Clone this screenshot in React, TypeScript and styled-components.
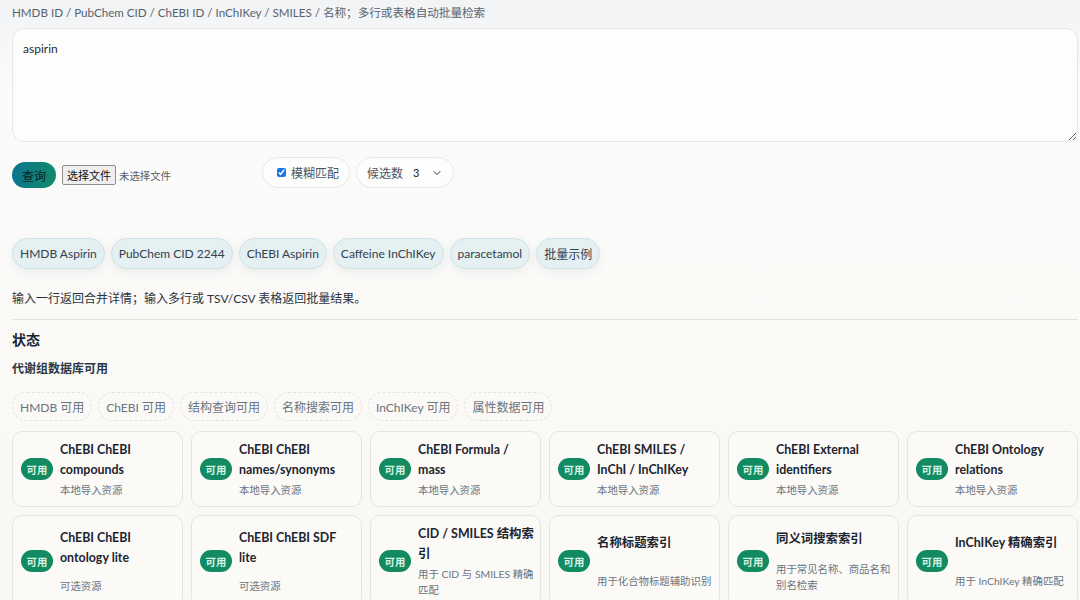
import React from "react";
import styled, { createGlobalStyle } from "styled-components";
import { ChevronDown } from "lucide-react";

const FONT = `Lato, "Noto Sans CJK SC", sans-serif`;

const Global = createGlobalStyle`
  html, body { margin: 0; padding: 0; }
  body {
    font-family: ${FONT};
    background: linear-gradient(180deg, #f1f3f5 0px, #fbfbfa 90px, #faf8f4 600px);
    min-height: 600px;
    color: #1f2a37;
  }
  * { box-sizing: border-box; }
`;

const Page = styled.div`
  padding: 5px 2px 0 12px;
  display: flex;
  flex-direction: column;
`;

const FieldLabel = styled.label`
  font-size: 11.6px;
  line-height: 16px;
  color: #58626f;
  margin-bottom: 7px;
`;

const Area = styled.textarea`
  width: 100%;
  height: 114px;
  border: 1px solid #e3e6ea;
  border-radius: 12px;
  background: #fdfdfc;
  padding: 12px 10px;
  font-family: ${FONT};
  font-size: 12px;
  line-height: 16px;
  color: #1f2a37;
  outline: none;
  display: block;
`;

const Toolbar = styled.div`
  display: flex;
  align-items: flex-end;
  margin-top: 15px;
`;

const Group = styled.div<{ $end?: boolean }>`
  display: flex;
  align-items: ${(p) => (p.$end ? "flex-end" : "center")};
  gap: 6px;
`;

const QueryBtn = styled.button`
  height: 26px;
  padding: 0 10px;
  border: none;
  border-radius: 999px;
  background: linear-gradient(90deg, #0c7590, #0f8a6a);
  color: #0c1d24;
  font-family: ${FONT};
  font-size: 12px;
`;

const FileBox = styled.div`
  display: flex;
  align-items: center;
  width: 200px;
  height: 23px;
  gap: 3px;
`;

const FileBtn = styled.span`
  display: inline-flex;
  align-items: center;
  height: 20px;
  padding: 0 4px;
  border: 1px solid #8f8f8f;
  border-radius: 2px;
  background: #efefef;
  font-size: 11px;
  color: #111;
`;

const FileText = styled.span`
  font-size: 10.4px;
  color: #555d66;
`;

const OptPill = styled.label`
  display: inline-flex;
  align-items: center;
  height: 31px;
  padding: 0 10px;
  gap: 5px;
  border: 1px solid #e6e8eb;
  border-radius: 999px;
  background: #fdfdfc;
  font-size: 12px;
  color: #4b5563;
`;

const Check = styled.input`
  width: 9px;
  height: 9px;
  margin: 0 0 0 4px;
  accent-color: #1a73e8;
`;

const SelectVal = styled.span`
  font-size: 11px;
  color: #222;
  margin-left: 5px;
  margin-right: 7px;
`;

const Chips = styled.div`
  display: flex;
  gap: 6px;
  margin-top: 50px;
`;

const Chip = styled.button`
  height: 31px;
  padding: 0 7px;
  border: 1px solid #cfe2e6;
  border-radius: 999px;
  background: #e4f0f1;
  box-shadow: 0 3px 10px rgba(40, 80, 90, 0.08);
  font-family: ${FONT};
  font-size: 12px;
  color: #344150;
`;

const Hint = styled.p`
  margin: 21px 0 0;
  font-size: 12px;
  line-height: 18px;
  color: #2a333d;
`;

const Divider = styled.hr`
  border: none;
  border-top: 1px solid #e4e4e1;
  margin: 11px 0 0;
  width: 100%;
`;

const H2 = styled.h2`
  margin: 9px 0 0;
  font-size: 14px;
  line-height: 22px;
  font-weight: 700;
  color: #1d2530;
`;

const H3 = styled.h3`
  margin: 9px 0 0;
  font-size: 12px;
  line-height: 18px;
  font-weight: 700;
  color: #2c3844;
`;

const StatusRow = styled.div`
  display: flex;
  gap: 6px;
  margin-top: 14px;
`;

const StatusPill = styled.span`
  display: inline-flex;
  align-items: center;
  height: 29px;
  padding: 0 7px;
  border: 1px dashed #dfe3e6;
  border-radius: 999px;
  font-size: 12px;
  color: #6a7480;
`;

const Grid = styled.div`
  display: grid;
  grid-template-columns: repeat(6, 1fr);
  gap: 8px;
  margin-top: 10px;
`;

const Card = styled.div`
  display: flex;
  align-items: center;
  gap: 7px;
  padding: 8px 6px 8px 8px;
  border: 1px solid #e4e5e2;
  border-radius: 10px;
  background: #fbfaf7;
`;

const Badge = styled.span`
  flex: none;
  display: inline-flex;
  align-items: center;
  justify-content: center;
  width: 32px;
  height: 22px;
  border-radius: 999px;
  background: #128a62;
  color: #d8f3e4;
  font-size: 10.4px;
  font-weight: 700;
`;

const CardText = styled.div`
  align-self: stretch;
  display: grid;
  align-items: center;
  row-gap: 2px;
`;

const CardTitle = styled.div`
  font-size: 12.4px;
  line-height: 20px;
  font-weight: 700;
  color: #1c2530;
`;

const CardSub = styled.div`
  font-size: 10.4px;
  line-height: 16px;
  color: #6b7480;
`;

const chips = ["HMDB Aspirin", "PubChem CID 2244", "ChEBI Aspirin", "Caffeine InChIKey", "paracetamol", "批量示例"];
const statuses = ["HMDB 可用", "ChEBI 可用", "结构查询可用", "名称搜索可用", "InChIKey 可用", "属性数据可用"];
const cards = [
  ["ChEBI ChEBI compounds", "本地导入资源"],
  ["ChEBI ChEBI names/synonyms", "本地导入资源"],
  ["ChEBI Formula / mass", "本地导入资源"],
  ["ChEBI SMILES / InChI / InChIKey", "本地导入资源"],
  ["ChEBI External identifiers", "本地导入资源"],
  ["ChEBI Ontology relations", "本地导入资源"],
  ["ChEBI ChEBI ontology lite", "可选资源"],
  ["ChEBI ChEBI SDF lite", "可选资源"],
  ["CID / SMILES 结构索引", "用于 CID 与 SMILES 精确匹配"],
  ["名称标题索引", "用于化合物标题辅助识别"],
  ["同义词搜索索引", "用于常见名称、商品名和别名检索"],
  ["InChIKey 精确索引", "用于 InChIKey 精确匹配"],
];

export default function App() {
  return (
    <>
      <Global />
      <Page>
        <FieldLabel>HMDB ID / PubChem CID / ChEBI ID / InChIKey / SMILES / 名称；多行或表格自动批量检索</FieldLabel>
        <Area defaultValue="aspirin" />
        <Toolbar>
          <Group>
            <QueryBtn>查询</QueryBtn>
            <FileBox>
              <FileBtn>选择文件</FileBtn>
              <FileText>未选择文件</FileText>
            </FileBox>
          </Group>
          <Group $end>
            <OptPill>
              <Check type="checkbox" defaultChecked />
              模糊匹配
            </OptPill>
            <OptPill>
              候选数
              <SelectVal>3</SelectVal>
              <ChevronDown size={12} strokeWidth={2} color="#333" />
            </OptPill>
          </Group>
        </Toolbar>
        <Chips>
          {chips.map((c) => (
            <Chip key={c}>{c}</Chip>
          ))}
        </Chips>
        <Hint>输入一行返回合并详情；输入多行或 TSV/CSV 表格返回批量结果。</Hint>
        <Divider />
        <H2>状态</H2>
        <H3>代谢组数据库可用</H3>
        <StatusRow>
          {statuses.map((s) => (
            <StatusPill key={s}>{s}</StatusPill>
          ))}
        </StatusRow>
        <Grid>
          {cards.map(([t, s]) => (
            <Card key={t}>
              <Badge>可用</Badge>
              <CardText>
                <CardTitle>{t}</CardTitle>
                <CardSub>{s}</CardSub>
              </CardText>
            </Card>
          ))}
        </Grid>
      </Page>
    </>
  );
}
